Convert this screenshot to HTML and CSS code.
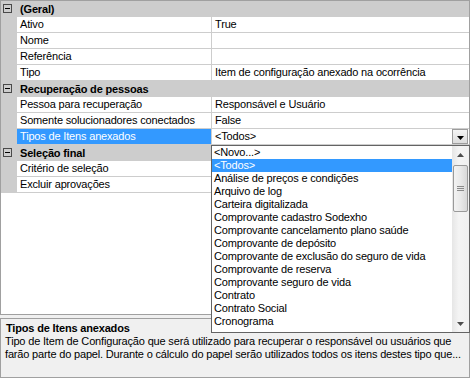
FILE: index.html
```html
<!DOCTYPE html>
<html lang="pt">
<head>
  <meta charset="UTF-8" />
  <title>Propriedades</title>
  <link rel="stylesheet" href="styles.css">
</head>
<body>
  <div class="grid">
    <div class="cat">
      <span class="toggle"><svg width="9" height="9" viewBox="0 0 9 9"><rect x="0.5" y="0.5" width="8" height="8" fill="none" stroke="#4a4a4a"/><line x1="2" y1="4.5" x2="7" y2="4.5" stroke="#000"/></svg></span>
      <span class="cat-label">(Geral)</span>
    </div>
    <div class="prop"><span class="margin"></span><span class="name">Ativo</span><span class="value">True</span></div>
    <div class="prop"><span class="margin"></span><span class="name">Nome</span><span class="value"></span></div>
    <div class="prop"><span class="margin"></span><span class="name">Referência</span><span class="value"></span></div>
    <div class="prop"><span class="margin"></span><span class="name">Tipo</span><span class="value">Item de configuração anexado na ocorrência</span></div>

    <div class="cat">
      <span class="toggle"><svg width="9" height="9" viewBox="0 0 9 9"><rect x="0.5" y="0.5" width="8" height="8" fill="none" stroke="#4a4a4a"/><line x1="2" y1="4.5" x2="7" y2="4.5" stroke="#000"/></svg></span>
      <span class="cat-label">Recuperação de pessoas</span>
    </div>
    <div class="prop"><span class="margin"></span><span class="name">Pessoa para recuperação</span><span class="value">Responsável e Usuário</span></div>
    <div class="prop"><span class="margin"></span><span class="name">Somente solucionadores conectados</span><span class="value">False</span></div>
    <div class="prop">
      <span class="margin"></span>
      <span class="name selected">Tipos de Itens anexados</span>
      <span class="value editing">
        <span class="value-text">&lt;Todos&gt;</span>
        <span class="drop-btn"><svg width="7" height="4" viewBox="0 0 7 4"><path d="M0 0h7L3.5 4z" fill="#000"/></svg></span>
      </span>
    </div>

    <div class="cat">
      <span class="toggle"><svg width="9" height="9" viewBox="0 0 9 9"><rect x="0.5" y="0.5" width="8" height="8" fill="none" stroke="#4a4a4a"/><line x1="2" y1="4.5" x2="7" y2="4.5" stroke="#000"/></svg></span>
      <span class="cat-label">Seleção final</span>
    </div>
    <div class="prop"><span class="margin"></span><span class="name">Critério de seleção</span><span class="value"></span></div>
    <div class="prop"><span class="margin"></span><span class="name">Excluir aprovações</span><span class="value"></span></div>
  </div>

  <div class="help">
    <div class="help-title">Tipos de Itens anexados</div>
    <div class="help-line">Tipo de Item de Configuração que será utilizado para recuperar o responsável ou usuários que</div>
    <div class="help-line">farão parte do papel. Durante o cálculo do papel serão utilizados todos os itens destes tipo que...</div>
  </div>

  <div class="droplist">
    <ul class="items">
      <li>&lt;Novo...&gt;</li>
      <li class="selected">&lt;Todos&gt;</li>
      <li>Análise de preços e condições</li>
      <li>Arquivo de log</li>
      <li>Carteira digitalizada</li>
      <li>Comprovante cadastro Sodexho</li>
      <li>Comprovante cancelamento plano saúde</li>
      <li>Comprovante de depósito</li>
      <li>Comprovante de exclusão do seguro de vida</li>
      <li>Comprovante de reserva</li>
      <li>Comprovante seguro de vida</li>
      <li>Contrato</li>
      <li>Contrato Social</li>
      <li>Cronograma</li>
    </ul>
    <div class="scrollbar">
      <span class="arrow"><svg width="7" height="4" viewBox="0 0 7 4"><path d="M3.5 0L7 4H0z" fill="#4d4d4d"/></svg></span>
      <div class="track">
        <div class="thumb">
          <svg width="7" height="6" viewBox="0 0 7 6"><path d="M0 0.5h7M0 2.5h7M0 4.5h7" stroke="#8a8a8a"/></svg>
        </div>
      </div>
      <span class="arrow"><svg width="7" height="4" viewBox="0 0 7 4"><path d="M0 0h7L3.5 4z" fill="#4d4d4d"/></svg></span>
    </div>
  </div>
</body>
</html>
```

FILE: styles.css
```css
body {
  margin: 0;
  width: 470px;
  height: 378px;
  position: relative;
  overflow: hidden;
  background: #f0f0f0;
  font-family: "Liberation Sans", Arial, sans-serif;
  font-size: 11px;
  letter-spacing: -0.17px;
  color: #000;
}
.grid {
  box-sizing: border-box;
  height: 315px;
  border: 1px solid #a0a0a0;
  background: #fff;
}
.cat {
  display: flex;
  height: 16px;
  line-height: 16px;
  background: #cdcdcd;
  font-weight: bold;
}
.toggle {
  width: 16px;
  display: flex;
  align-items: flex-start;
  padding: 3px 0 0 2px;
  box-sizing: border-box;
}
.toggle svg {
  display: block;
}
.cat-label {
  padding-left: 3px;
}
.prop {
  display: flex;
  height: 16px;
}
.margin {
  width: 16px;
  background: #cdcdcd;
}
.name,
.value {
  box-sizing: border-box;
  height: 16px;
  line-height: 15px;
  border-bottom: 1px solid #cdcdcd;
  padding-left: 3px;
  white-space: nowrap;
  overflow: hidden;
}
.name {
  width: 195px;
  border-right: 1px solid #cdcdcd;
}
.name.selected {
  background: #3399ff;
  color: #fff;
}
.value {
  flex: 1;
}
.value.editing {
  display: flex;
  padding-right: 1px;
}
.value-text {
  flex: 1;
}
.drop-btn {
  box-sizing: border-box;
  width: 16px;
  height: 15px;
  border: 1px solid #9c9c9c;
  background: linear-gradient(#f4f4f4, #dcdcdc);
  display: flex;
  align-items: center;
  justify-content: center;
  padding-top: 2px;
}
.help {
  box-sizing: border-box;
  height: 60px;
  margin-top: 3px;
  border: 1px solid #a0a0a0;
  background: #f0f0f0;
  padding: 3px 4px 0;
  line-height: 13px;
}
.help-title {
  font-weight: bold;
  padding-left: 1px;
}
.help-line {
  white-space: nowrap;
}
.droplist {
  position: absolute;
  left: 211px;
  top: 145px;
  width: 259px;
  height: 188px;
  box-sizing: border-box;
  border: 1px solid #646464;
  background: #fff;
  display: flex;
}
.items {
  list-style: none;
  margin: 0;
  padding: 0;
  flex: 1;
}
.items li {
  height: 13px;
  line-height: 13px;
  padding-left: 2px;
  white-space: nowrap;
}
.items li.selected {
  background: #3399ff;
  color: #fff;
}
.scrollbar {
  width: 17px;
  display: flex;
  flex-direction: column;
  background: linear-gradient(90deg, #e6e6e6, #f4f4f4 40%, #f0f0f0);
}
.arrow {
  height: 17px;
  display: flex;
  align-items: center;
  justify-content: center;
}
.track {
  flex: 1;
  padding-top: 2px;
}
.thumb {
  box-sizing: border-box;
  height: 47px;
  margin: 0 1px;
  border: 1px solid #9a9a9a;
  border-radius: 2px;
  background: linear-gradient(90deg, #f3f3f3, #e9e9e9 50%, #d8d8d8);
  display: flex;
  align-items: center;
  justify-content: center;
}
.thumb svg {
  display: block;
}
```
